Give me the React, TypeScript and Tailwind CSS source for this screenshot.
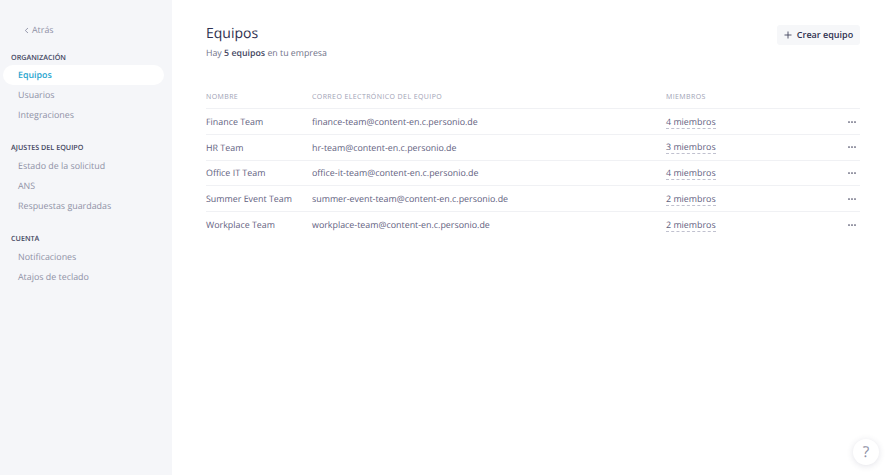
const font = "[font-family:'Open_Sans','Noto_Sans',sans-serif] [text-rendering:geometricPrecision]";

function NavHeader({ children }: { children: string }) {
  return <div className="pl-[11px] h-[16px] leading-[16px] text-[7.2px] font-semibold text-[#44465f]">{children}</div>;
}

function NavItem({ children, active }: { children: string; active?: boolean }) {
  return (
    <div className={`h-[20px] ml-[3px] mr-[8px] pl-[15px] flex items-center rounded-full text-[8.9px] ${active ? "bg-white text-[#2aa5cf] font-semibold" : "text-[#8f91a6]"}`}>
      {children}
    </div>
  );
}

const teams = [
  ["Finance Team", "finance-team@content-en.c.personio.de", "4 miembros"],
  ["HR Team", "hr-team@content-en.c.personio.de", "3 miembros"],
  ["Office IT Team", "office-it-team@content-en.c.personio.de", "4 miembros"],
  ["Summer Event Team", "summer-event-team@content-en.c.personio.de", "2 miembros"],
  ["Workplace Team", "workplace-team@content-en.c.personio.de", "2 miembros"],
];

export default function App() {
  return (
    <div className={`${font} relative flex h-[475px] w-[890px] overflow-hidden bg-white`}>
      <aside className="w-[172px] shrink-0 bg-[#f5f6f9] pt-[22px]">
        <div className="flex h-[16px] items-center gap-[3px] pl-[24px] text-[8.9px] text-[#8f91a6]">
          <svg width="5" height="7" viewBox="0 0 5 7" fill="none" stroke="#8f91a6" strokeWidth="0.9"><path d="M4 1 1.3 3.5 4 6" /></svg>
          <span>Atrás</span>
        </div>
        <div className="mt-[12px]">
          <NavHeader>ORGANIZACIÓN</NavHeader>
          <div className="-mt-[1px]"><NavItem active>Equipos</NavItem><NavItem>Usuarios</NavItem><NavItem>Integraciones</NavItem></div>
        </div>
        <div className="mt-[15px]">
          <NavHeader>AJUSTES DEL EQUIPO</NavHeader>
          <div><NavItem>Estado de la solicitud</NavItem><NavItem>ANS</NavItem><NavItem>Respuestas guardadas</NavItem></div>
        </div>
        <div className="mt-[15px]">
          <NavHeader>CUENTA</NavHeader>
          <div><NavItem>Notificaciones</NavItem><NavItem>Atajos de teclado</NavItem></div>
        </div>
      </aside>
      <main className="flex-1 pl-[34px] pr-[30px] pt-[23px]">
        <div className="flex items-start justify-between">
          <div>
            <h1 className="text-[14px] leading-[22px] text-[#2f3150]">Equipos</h1>
            <p className="mt-[1px] text-[8.8px] leading-[14px] text-[#707289]">Hay <span className="font-semibold text-[#44465f]">5 equipos</span> en tu empresa</p>
          </div>
          <button className="mt-[2px] flex h-[20px] w-[83px] items-center justify-center gap-[5px] rounded-[3px] bg-[#f6f7f9] text-[9px] font-semibold text-[#2f3150]">
            <svg width="8" height="8" viewBox="0 0 8 8" stroke="#44465f" strokeWidth="0.9"><path d="M4 .5v7M.5 4h7" /></svg>
            Crear equipo
          </button>
        </div>
        <div className="mt-[27px] flex h-[22px] items-center border-b border-[#f0f1f4] pt-[1px] text-[7px] tracking-[0.4px] text-[#a0a2b5]">
          <div className="w-[106px]">NOMBRE</div>
          <div className="w-[354px]">CORREO ELECTRÓNICO DEL EQUIPO</div>
          <div>MIEMBROS</div>
        </div>
        {teams.map(([name, email, members], i) => (
          <div key={name} className={`flex h-[25.75px] items-center pt-[0.5px] text-[8.9px] text-[#5f6180] ${i < 4 ? "border-b border-[#f0f1f4]" : ""}`}>
            <div className="w-[106px]">{name}</div>
            <div className="w-[354px]">{email}</div>
            <div className="flex-1"><span className="border-b border-dashed border-[#c0c1cf] leading-[12px] inline-block">{members}</span></div>
            <svg className="mr-[4px]" width="8" height="2" viewBox="0 0 8 2" fill="#44465f"><circle cx="1" cy="1" r="0.85" /><circle cx="4" cy="1" r="0.85" /><circle cx="7" cy="1" r="0.85" /></svg>
          </div>
        ))}
      </main>
      <div className="absolute left-[853px] top-[439px] flex h-[26px] w-[26px] items-center justify-center rounded-full bg-white text-[15px] text-[#8f91a6] shadow-[0_1px_6px_rgba(60,60,100,0.15)]">?</div>
    </div>
  );
}
